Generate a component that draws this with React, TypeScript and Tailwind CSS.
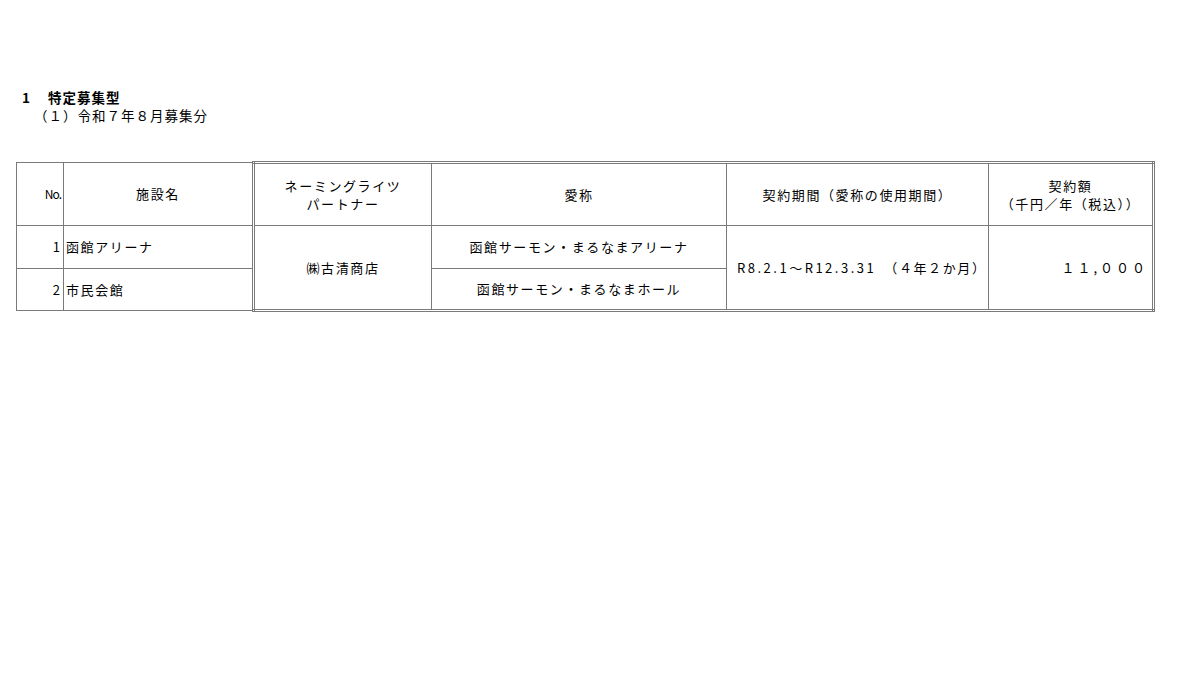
import React from 'react'

const cell = 'border border-[#7a7a7a] align-middle'
const grp = 'border-double'

function App() {
  return (
    <div
      className="bg-white w-[1200px] h-[675px] text-black text-[13px] leading-[18px] tracking-[1.6px]"
      style={{ fontFamily: '"Noto Sans CJK JP", "Noto Sans", sans-serif' }}
    >
      <div className="pt-[88px] pl-[22px] tracking-[1px]">
        <p className="font-bold flex text-[13.5px]">
          <span className="w-[26px]">1</span>
          <span>特定募集型</span>
        </p>
        <p className="pl-[12px] text-[13.5px]">（１）令和７年８月募集分</p>
      </div>

      <table className="ml-[16px] mt-[37px] border-collapse table-fixed w-[1137px]">
        <colgroup>
          <col className="w-[47px]" />
          <col className="w-[190px]" />
          <col className="w-[178px]" />
          <col className="w-[295px]" />
          <col className="w-[262px]" />
          <col className="w-[165px]" />
        </colgroup>
        <tbody>
          <tr className="h-[63px]">
            <td className={`${cell} text-right pr-[2px] text-[12px] tracking-[-1px]`}>No.</td>
            <td className={`${cell} text-center`}>施設名</td>
            <td className={`${cell} ${grp} border-t-[3px] border-l-[3px] text-center`}>
              ネーミングライツ
              <br />
              パートナー
            </td>
            <td className={`${cell} ${grp} border-t-[3px] text-center`}>愛称</td>
            <td className={`${cell} ${grp} border-t-[3px] text-center`}>契約期間（愛称の使用期間）</td>
            <td className={`${cell} ${grp} border-t-[3px] border-r-[3px] text-center`}>
              契約額
              <br />
              （千円／年（税込））
            </td>
          </tr>
          <tr className="h-[43px]">
            <td className={`${cell} text-right pr-[3px] tracking-normal`}>1</td>
            <td className={`${cell} pl-[2px]`}>函館アリーナ</td>
            <td rowSpan={2} className={`${cell} ${grp} border-l-[3px] border-b-[3px] text-center`}>
              ㈱古清商店
            </td>
            <td className={`${cell} text-center`}>函館サーモン・まるなまアリーナ</td>
            <td rowSpan={2} className={`${cell} ${grp} border-b-[3px] pl-[10px]`}>
              <span className="tracking-[2.5px]">R8.2.1～R12.3.31</span>　（４年２か月）
            </td>
            <td rowSpan={2} className={`${cell} ${grp} border-b-[3px] border-r-[3px] text-right pr-[4px] tracking-[3px]`}>
              １１,０００
            </td>
          </tr>
          <tr className="h-[42px]">
            <td className={`${cell} text-right pr-[3px] tracking-normal`}>2</td>
            <td className={`${cell} pl-[2px]`}>市民会館</td>
            <td className={`${cell} ${grp} border-b-[3px] text-center`}>函館サーモン・まるなまホール</td>
          </tr>
        </tbody>
      </table>
    </div>
  )
}

export default App
